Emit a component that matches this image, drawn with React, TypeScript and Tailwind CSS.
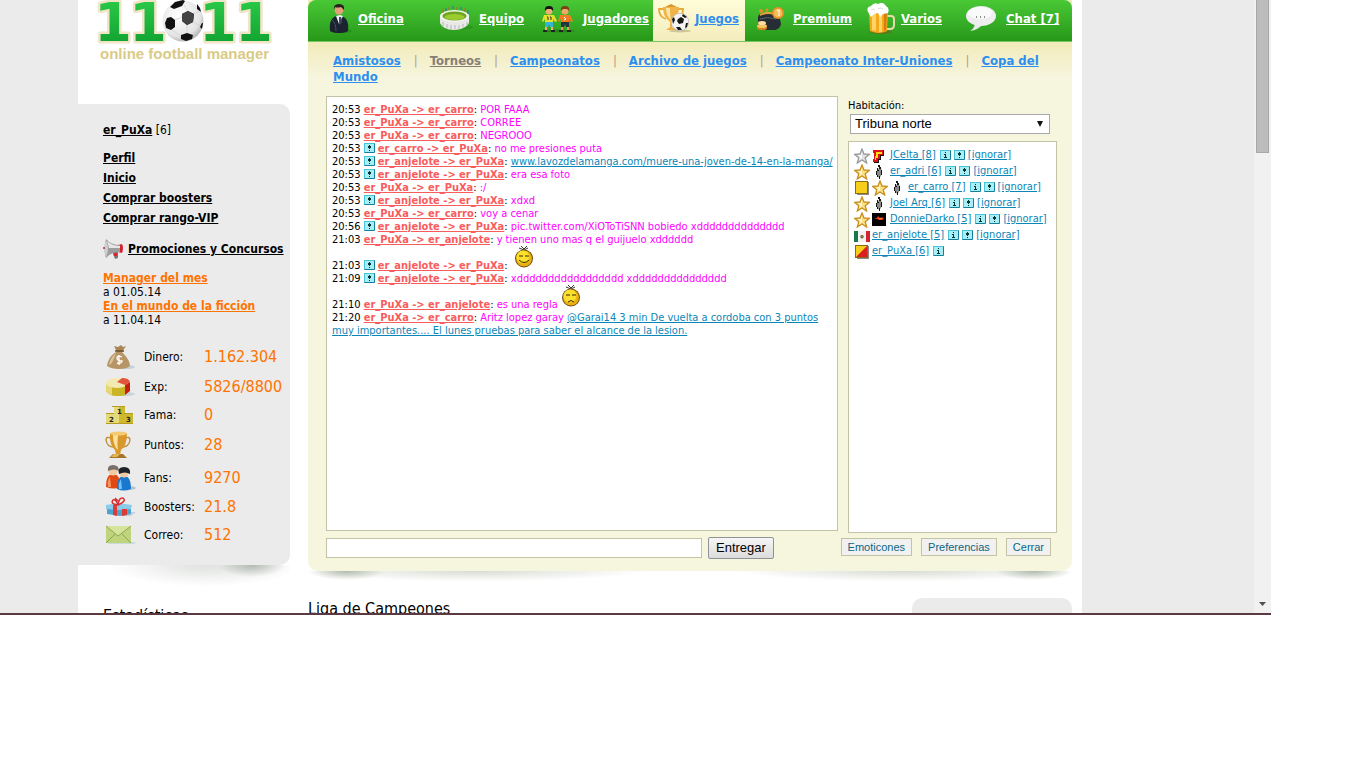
import type { ReactNode } from 'react';

function Logo() {
    return (
        <svg viewBox="0 0 212 70" className="block w-[212px] h-[70px]" role="img" aria-label="11x11 online football manager">
            <defs>
                <linearGradient id="logoGreen" x1="0" y1="0" x2="0" y2="1">
                    <stop offset="0" stopColor="#2fd04c" />
                    <stop offset="1" stopColor="#0c9a2c" />
                </linearGradient>
                <radialGradient id="logoBall" cx="0.4" cy="0.35" r="0.75">
                    <stop offset="0" stopColor="#fff" />
                    <stop offset="0.7" stopColor="#e4e4e4" />
                    <stop offset="1" stopColor="#999" />
                </radialGradient>
            </defs>
            {[35, 70, 140, 176].map((x) => (
                <text
                    key={x}
                    x={x}
                    y="41"
                    textAnchor="middle"
                    fontFamily="DejaVu Sans"
                    fontWeight="700"
                    fontSize="54"
                    fill="url(#logoGreen)"
                    stroke="#f1e5c8"
                    strokeWidth="5"
                    strokeLinejoin="round"
                    paintOrder="stroke"
                >
                    1
                </text>
            ))}
            <circle cx="105" cy="21" r="20.500" fill="url(#logoBall)" />
            <path d="M104 14l6-3 6 3-1 8-6 3-5-4zM89 18l4-1 4 3v7l-4 3-5-2-1-5zM103 35l6-2 6 2-1 4-6 2-5-2zM92 7l5-5 8-2 2 1-3 5-8 3zM119 4l3 4 1 4-4-3zM124 23l1 0-1 6-2-2z" fill="#111" />
            <path d="M104 14l6-3 6 3-1 8-6 3-5-4z" fill="#444" />
            <path d="M97 20l7-3M110 11l-4-6M116 14l5-3M109 25v8M115 22l7 4M94 30l9 6" stroke="#d2d2d2" strokeWidth="0.800" fill="none" />
            <text x="22" y="59" fontFamily="Liberation Sans" fontWeight="700" fontSize="15" fill="#d9cb87">
                online football manager
            </text>
        </svg>
    );
}

function SuitIcon() {
    return (
        <svg viewBox="0 0 24 30" className="w-[24px] h-[30px] shrink-0" aria-hidden="true">
            <ellipse cx="14" cy="27" rx="10" ry="2" fill="#1d7a14" opacity="0.500" />
            <path d="M2 27q-1-8 2-12 2-3 6-3 6 0 8 3 3 4 2 12-3 2-9 2t-9-2z" fill="#1b2330" />
            <path d="M8 12l3 8 4-8-3-1z" fill="#eef2f6" />
            <path d="M11 13h2l1 5-2 3-1-3z" fill="#3b4656" />
            <circle cx="11" cy="6" r="4.500" fill="#e3a27c" />
            <path d="M6 6q-1-6 5-6t5 6q-2-2-3-3-4 1-6 0z" fill="#26201f" />
            <path d="M4 16q4 3 4 11" stroke="#41506a" fill="none" />
        </svg>
    );
}

function StadiumIcon() {
    return (
        <svg viewBox="0 0 34 26" className="w-[34px] h-[26px] shrink-0" aria-hidden="true">
            <ellipse cx="19" cy="21" rx="15" ry="3" fill="#1d7a14" opacity="0.400" />
            <path d="M1 10v7q3 7 14 7t15-7v-7z" fill="#e8e8e6" />
            <ellipse cx="15.500" cy="10" rx="14.500" ry="6" fill="#f4f4f0" />
            <ellipse cx="15.500" cy="10" rx="12" ry="4.500" fill="#6ea51f" />
            <ellipse cx="15.500" cy="11" rx="10" ry="3" fill="#9ccb2f" />
            <path d="M4 16v4M8 18v4M12 19v4M16 19v4M20 19v4M24 18v4M28 16v4" stroke="#b5b8b4" />
            <path d="M4 3v4M10 1v3M18 1v3M26 2v4" stroke="#d05a2c" />
            <path d="M7 2v3M14 0v3M22 1v3M29 4v4" stroke="#2c6fb0" />
        </svg>
    );
}

function PlayersIcon() {
    return (
        <svg viewBox="0 0 34 28" className="w-[34px] h-[28px] shrink-0" aria-hidden="true">
            <ellipse cx="18" cy="26" rx="16" ry="1.500" fill="#176b10" opacity="0.500" />
            <circle cx="8" cy="6" r="3.500" fill="#f0b070" />
            <path d="M4 6q-1-5 4-5t4 5l-2-2H6z" fill="#141414" />
            <path d="M3 10h10l3 6-2 1-2-3v4H4v-4l-2 3-1-1z" fill="#e5e02c" />
            <path d="M4 17h8v5H9l-1-3-1 3H4z" fill="#35b4dc" />
            <path d="M4 22h2v3H4zM10 22h2v3h-2z" fill="#f0b070" />
            <path d="M2 25h4v2H2zM10 25h4v2h-4z" fill="#222" />
            <path d="M6 12h1v3M9 12h1v3" stroke="#333" fill="none" />
            <circle cx="24" cy="6" r="3.500" fill="#f0a868" />
            <path d="M20 6q-1-5 4-5t4 5l-2-2h-4z" fill="#7d3f18" />
            <path d="M19 10h10l3 6-2 1-2-3v4h-8v-4l-2 3-1-1z" fill="#f07b20" />
            <path d="M20 17h8v5h-3l-1-3-1 3h-3z" fill="#26313f" />
            <path d="M20 22h2v3h-2zM26 22h2v3h-2z" fill="#e89a60" />
            <path d="M18 25h4v2h-4zM26 25h4v2h-4z" fill="#222" />
            <path d="M23 12l2 2-2 1" stroke="#fff" fill="none" />
        </svg>
    );
}

function CupBallIcon() {
    return (
        <svg viewBox="0 0 34 30" className="w-[34px] h-[30px] shrink-0" aria-hidden="true">
            <ellipse cx="22" cy="27" rx="11" ry="1.500" fill="#cfc79a" />
            <path d="M6 5H1q0 8 7 10M20 5h5q0 8-6 9" stroke="#e9a93c" strokeWidth="1.800" fill="none" />
            <path d="M5 3h16q0 9-5 13l-2 2v5l4 3H8l4-3v-5l-2-2Q5 12 5 3z" fill="#f0b44a" />
            <path d="M8 4h4q0 8 1 12-5-4-5-12z" fill="#fde4a4" />
            <path d="M7 3l6-3 6 3z" fill="#dc962c" />
            <circle cx="22" cy="18" r="9" fill="#a9a9a9" />
            <circle cx="22" cy="18" r="8.500" fill="#f3f3f3" />
            <path d="M20 15l3-2 3 2-1 4-4 1-2-3zM14 15l2-2 1 3-2 4zM25 10l4 3-2 1-3-2zM28 19l2 0-1 4-2 1zM18 23l4 0 2 3-4 0z" fill="#171717" />
        </svg>
    );
}

function PurseIcon() {
    return (
        <svg viewBox="0 0 32 26" className="w-[32px] h-[26px] shrink-0" aria-hidden="true">
            <path d="M3 12q0-4 4-5h13q4 1 5 6l1 5q-1 5-6 6H8q-5-1-5-6z" fill="#262d34" />
            <path d="M5 9q8-4 18 0" stroke="#e9a437" strokeWidth="2" fill="none" />
            <path d="M5 13q7-3 16 0" stroke="#59656f" fill="none" />
            <circle cx="6" cy="5" r="2" fill="#e28d2a" />
            <circle cx="12" cy="4" r="1.500" fill="#e28d2a" />
            <circle cx="23" cy="7" r="6" fill="#e9912b" />
            <circle cx="23" cy="7" r="4.300" fill="#f7bd5c" />
            <path d="M22 5l2-1v6" stroke="#fff3cf" strokeWidth="1.300" fill="none" />
            <ellipse cx="7" cy="22" rx="5" ry="2" fill="#d9831c" />
            <ellipse cx="7" cy="20" rx="5" ry="2" fill="#f8c660" />
            <ellipse cx="7" cy="17" rx="4" ry="2" fill="#fde09a" />
        </svg>
    );
}

function BeerIcon() {
    return (
        <svg viewBox="0 0 28 32" className="w-[28px] h-[32px] shrink-0" aria-hidden="true">
            <ellipse cx="14" cy="29" rx="11" ry="2" fill="#78601c" opacity="0.600" />
            <path d="M20 13h4q3 0 3 3v6q0 4-4 4h-3" stroke="#e7dca8" strokeWidth="2" fill="none" />
            <path d="M2 8h19l-1 20q-8 4-17 0z" fill="#f4a81c" />
            <path d="M5 10h4v18l-4-1zM12 10h3v19h-3z" fill="#ffd467" />
            <path d="M17 10h3l-1 17-2 1z" fill="#d57f0f" />
            <path d="M1 9q-2-5 3-6 3-4 7-2 5-3 8 2 4 2 2 7l-5 1-3 3-2-4-4 1-3 3z" fill="#fff" />
            <path d="M4 7q2-2 4 0M11 6q3-2 5 0" stroke="#e0ddd0" fill="none" />
        </svg>
    );
}

function BubbleIcon() {
    return (
        <svg viewBox="0 0 32 26" className="w-[32px] h-[26px] shrink-0" aria-hidden="true">
            <path d="M10 18q-1 5-5 7 8-1 12-6z" fill="#e9e9e9" />
            <ellipse cx="16" cy="10" rx="15" ry="10" fill="#eee" />
            <ellipse cx="15" cy="7" rx="12" ry="6" fill="#fafafa" />
            <path d="M11 11h1M15 11h1M19 11h1" stroke="#222" />
        </svg>
    );
}

function MegaphoneIcon() {
    return (
        <svg viewBox="0 0 22 20" className="w-[22px] h-[20px] shrink-0" aria-hidden="true">
            <path d="M10 12h5v7l-3 1-2-5z" fill="#777" />
            <path d="M11 14h3v3h-3z" fill="#cf2a30" />
            <path d="M15 6l4-1q2 4 0 9l-4-1z" fill="#d5212b" />
            <path d="M3 0q5 6 14 6v7q-9 0-14 6-3-9 0-19z" fill="#9d9d9d" />
            <path d="M4 2q5 5 13 5v2L6 9z" fill="#e6e6e6" />
            <path d="M3 1q4 9 0 17-3-9 0-17z" fill="#cfcfcf" />
            <circle cx="1" cy="9" r="1" fill="#c81f26" />
        </svg>
    );
}

function MoneyIcon() {
    return (
        <svg viewBox="0 0 32 26" className="w-[32px] h-[26px]" aria-hidden="true">
            <ellipse cx="20" cy="23" rx="10" ry="2" fill="#c2d3da" />
            <path d="M9 2l4 1 3-2 2 2 3-1-4 6h-5z" fill="#a98757" />
            <path d="M11 8h6q8 8 8 14-3 3-11 3T2 22Q3 13 11 8z" fill="#b89566" />
            <path d="M11 9q-6 5-7 12 3-1 5-7z" fill="#dcc49c" />
            <path d="M10 7h9" stroke="#6b4f2a" strokeWidth="1.500" />
            <path d="M17 13q-5-2-5 1t5 3q0 3-5 2M14 11v10" stroke="#fff" strokeWidth="1.300" fill="none" />
        </svg>
    );
}

function ExpIcon() {
    return (
        <svg viewBox="0 0 32 22" className="w-[32px] h-[22px]" aria-hidden="true">
            <ellipse cx="18" cy="18" rx="12" ry="2" fill="#c5d5da" />
            <path d="M1 7v8q3 5 11 5 6 0 8-1V8z" fill="#c9b526" />
            <path d="M1 7v8q2 3 6 4V9z" fill="#e6d872" />
            <ellipse cx="12" cy="7" rx="11" ry="5" fill="#f3eab2" />
            <path d="M20 9l5-3v9l-5 4z" fill="#c81e0c" />
            <path d="M12 6l5-4q7 0 8 4l-5 3z" fill="#e2543c" />
        </svg>
    );
}

function PodiumIcon() {
    return (
        <svg viewBox="0 0 32 20" className="w-[32px] h-[20px]" aria-hidden="true">
            <path d="M1 9h8V1h11v8h8v9H1z" fill="#cdb92e" />
            <path d="M1 9h8V1h5v17H1z" fill="#e4da7c" />
            <path d="M7 1h13v1H7zM1 8h8v1H1zM19 8h9v1h-9zM1 18h27v1H1z" fill="#b89b22" />
            <g fontFamily="DejaVu Sans" fontWeight="700" fontSize="7" fill="#222">
                <text x="12" y="9">1</text>
                <text x="4" y="17">2</text>
                <text x="21" y="17">3</text>
            </g>
        </svg>
    );
}

function TrophyIcon() {
    return (
        <svg viewBox="0 0 32 28" className="w-[32px] h-[28px]" aria-hidden="true">
            <path d="M6 7q-5-2-5 2 1 7 8 7M20 7q5-2 5 2-1 7-8 7" stroke="#c28e35" strokeWidth="1.400" fill="none" />
            <path d="M5 2q8 3 17 0 0 13-6 17l-1 5h-4l-1-5Q4 14 5 2z" fill="#d8982c" />
            <path d="M8 4h5q-1 10 0 15-5-4-5-15z" fill="#fbe19c" />
            <ellipse cx="13.500" cy="2.500" rx="8.500" ry="2" fill="#f5ca72" />
            <path d="M8 23h10l4 4H4z" fill="#a87629" />
            <path d="M9 23h6l-3 3H6z" fill="#e5b553" />
        </svg>
    );
}

function FansIcon() {
    return (
        <svg viewBox="0 0 32 28" className="w-[32px] h-[28px]" aria-hidden="true">
            <ellipse cx="22" cy="24" rx="9" ry="2" fill="#b4c4cc" />
            <path d="M1 23q0-13 7-13t8 13q-7 3-15 0z" fill="#e04a12" />
            <path d="M5 13q-3 4-2 10l3 0z" fill="#f99764" />
            <circle cx="8" cy="7" r="4.500" fill="#f3c9a2" />
            <path d="M3 7q-1-6 5-6t6 6q-5-3-11 0z" fill="#77706a" />
            <path d="M12 25q0-13 7-13t7 13q-7 3-14 0z" fill="#1b78cf" />
            <path d="M16 15q-3 4-2 10l3 0z" fill="#7cc0f2" />
            <circle cx="19" cy="9" r="4.500" fill="#f3c9a2" />
            <path d="M14 10q-2-7 5-7t6 7q-5-3-11 0z" fill="#1d2329" />
        </svg>
    );
}

function GiftIcon() {
    return (
        <svg viewBox="0 0 32 20" className="w-[32px] h-[20px]" aria-hidden="true">
            <path d="M20 15h11l-5 4h-8z" fill="#c6d2d8" />
            <path d="M2 10h24v7l-11 2-13-2z" fill="#4ba3d4" />
            <path d="M1 8l12-2 14 2-1 4-12 1-13-1z" fill="#8bcbea" />
            <path d="M8 8l4-1v12l-4-1zM17 12h5v6l-5 1z" fill="#dd3b36" />
            <path d="M13 8Q5 7 8 3q3-1 5 5 1-8 5-7 4 3-5 7zM10 1l3 3" stroke="#d92f33" strokeWidth="1.500" fill="none" />
        </svg>
    );
}

function MailIcon() {
    return (
        <svg viewBox="0 0 32 20" className="w-[32px] h-[20px]" aria-hidden="true">
            <path d="M4 17h27l-2 2H3z" fill="#c9dbd9" />
            <path d="M1 1h25v17H1z" fill="#bfd47c" />
            <path d="M1 1h25L13 11z" fill="#d5e49b" />
            <path d="M1 1l12 10L26 1M1 18l9-9M26 18l-9-9" stroke="#7f9b45" strokeWidth="0.800" fill="none" />
        </svg>
    );
}

function InfoIcon() {
    return (
        <svg viewBox="0 0 11 10" className="block w-[11px] h-[10px]" aria-hidden="true">
            <rect width="11" height="10" rx="1" fill="#12809c" />
            <path d="M0 0h10v1H1v8H0z" fill="#48c4da" />
            <path d="M1 1h9v8H1z" fill="#a8eef6" />
            <path d="M5 2h1v1H5zM4 4h2v3h1v1H4V7h1V5H4z" fill="#033" />
        </svg>
    );
}

function AlertIcon({ inline = false }: { inline?: boolean }) {
    return (
        <svg viewBox="0 0 11 10" className={inline ? 'inline w-[11px] h-[10px] align-[-1px]' : 'block w-[11px] h-[10px]'} aria-hidden="true">
            <rect width="11" height="10" rx="1" fill="#12809c" />
            <path d="M0 0h10v1H1v8H0z" fill="#48c4da" />
            <path d="M1 1h9v8H1z" fill="#a8eef6" />
            <path d="M5 2h1v1h1v2H6v1H5V5H4V3h1zM5 7h1v1H5z" fill="#033" />
        </svg>
    );
}

function Smiley({ sad = false }: { sad?: boolean }) {
    return (
        <svg viewBox="0 0 20 23" className="inline w-[20px] h-[23px] align-baseline" role="img" aria-label={sad ? 'triste' : 'contento'}>
            <path d="M7 0l3 3 3-3M5 2l5 2 4-2" stroke="#333" fill="none" />
            <circle cx="10" cy="12.500" r="9" fill="#6c4c0c" />
            <circle cx="10" cy="12.500" r="8" fill="#e9b010" />
            <circle cx="9" cy="11" r="6.500" fill="#fbe02c" />
            <path d="M5 10h4M11 10h4" stroke="#3a2600" />
            <path d={sad ? 'M7 17q3-3 6 0' : 'M5 14q5 5 10 0'} stroke="#3a2600" fill="none" />
        </svg>
    );
}

function Star({ silver = false }: { silver?: boolean }) {
    return (
        <svg viewBox="0 0 16 16" className="w-[16px] h-[16px]" aria-hidden="true">
            <path
                d="M8 1l2 5 5.500.3-4.300 3.500 1.500 5.200L8 12l-4.700 3 1.500-5.200L.5 6.300 6 6z"
                fill={silver ? '#e2e2e2' : '#fbe08a'}
                stroke={silver ? '#999' : '#c98f1c'}
                strokeWidth="1.300"
            />
            <path d="M8 4v6l-3 2 1-3-2-2h3z" fill={silver ? '#fafafa' : '#fff6cf'} />
        </svg>
    );
}

function Spain() {
    return (
        <svg viewBox="0 0 14 14" className="w-[14px] h-[14px] mx-[2px]" aria-hidden="true">
            <path d="M2 1h10v6H9v4H7v3H2v-3h1V5H2z" fill="#161616" />
            <path d="M1 1h10v5H8v4H6v3H1v-3h1V4H1z" fill="#e11414" />
            <path d="M4 3h6v2H6v4H4v2H3V7h1z" fill="#ffdf12" />
        </svg>
    );
}

function Feather() {
    return (
        <svg viewBox="0 0 14 16" className="w-[14px] h-[16px] mx-[2px]" aria-hidden="true">
            <path d="M7 4h2l1 3-1 5-2 2-2-3V7z" fill="#8a8a8a" />
            <path d="M6 1h2v2h1v2H7V3H6zM5 4h1v3H5zM4 7h1v4H4zM9 6h1v5H9zM5 11h1v2H5zM7 12h1v3H7zM6 6h1v1H6z" fill="#151515" />
        </svg>
    );
}

function Card({ red = false }: { red?: boolean }) {
    return (
        <svg viewBox="0 0 16 16" className="w-[16px] h-[16px]" aria-hidden="true">
            <path d="M3 2h12v13H3z" fill="#8b8b8b" />
            <path d="M1 1h13v13H1z" fill="#8a6d12" />
            <path d="M2 2h11v11H2z" fill="#f6cf1c" />
            {red && <path d="M13 2v11H2z" fill="#dc1f1f" />}
        </svg>
    );
}

function Fire() {
    return (
        <svg viewBox="0 0 14 14" className="w-[14px] h-[14px] mx-[2px]" aria-hidden="true">
            <path d="M0 0h14v13H0z" fill="#000" />
            <path d="M2 6l3-1 1-2 2 2 2-1 2 2-2 1H7L5 6z" fill="#f0381c" />
            <path d="M4 6h3l1-1 2 1z" fill="#ffc32c" />
        </svg>
    );
}

function Mexico() {
    return (
        <svg viewBox="0 0 16 16" className="w-[16px] h-[16px]" aria-hidden="true">
            <path d="M0 3h16v11H0z" fill="#f2f2f2" />
            <path d="M0 3h4v11H0z" fill="#187a4c" />
            <path d="M12 3h4v11h-4z" fill="#cf2530" />
            <path d="M7 7h2l1 2-2 2-2-2z" fill="#85724a" />
        </svg>
    );
}

const navItems = [
    { label: 'Oficina', icon: <SuitIcon />, cls: 'pl-[20px] gap-[6px]' },
    { label: 'Equipo', icon: <StadiumIcon />, cls: 'pl-[13px] gap-[6px]' },
    { label: 'Jugadores', icon: <PlayersIcon />, cls: 'pl-[9px] gap-[8px]' },
    { label: 'Juegos', icon: <CupBallIcon />, cls: 'pl-[5px] gap-[3px]', active: true },
    { label: 'Premium', icon: <PurseIcon />, cls: 'pl-[10px] gap-[6px]' },
    { label: 'Varios', icon: <BeerIcon />, cls: 'pl-[12px] gap-[6px]' },
    { label: 'Chat [7]', icon: <BubbleIcon />, cls: 'pl-[13px] gap-[9px]' },
];

const subItems = ['Amistosos', 'Torneos', 'Campeonatos', 'Archivo de juegos', 'Campeonato Inter-Uniones', 'Copa del Mundo'];

const stats = [
    { label: 'Dinero', value: '1.162.304', icon: <MoneyIcon />, cls: 'h-[30px]' },
    { label: 'Exp', value: '5826/8800', icon: <ExpIcon />, cls: 'h-[30px]' },
    { label: 'Fama', value: '0', icon: <PodiumIcon />, cls: 'h-[26px]' },
    { label: 'Puntos', value: '28', icon: <TrophyIcon />, cls: 'h-[34px]' },
    { label: 'Fans', value: '9270', icon: <FansIcon />, cls: 'h-[32px]' },
    { label: 'Boosters', value: '21.8', icon: <GiftIcon />, cls: 'h-[26px]' },
    { label: 'Correo', value: '512', icon: <MailIcon />, cls: 'h-[30px]' },
];

type Message = { time: string; alert?: boolean; who: string; body: ReactNode };

const linkCls = 'text-[#0a86b8] underline';

const messages: Message[] = [
    { time: '20:53', who: 'er_PuXa -> er_carro', body: 'POR FAAA' },
    { time: '20:53', who: 'er_PuXa -> er_carro', body: 'CORREE' },
    { time: '20:53', who: 'er_PuXa -> er_carro', body: 'NEGROOO' },
    { time: '20:53', alert: true, who: 'er_carro -> er_PuXa', body: 'no me presiones puta' },
    {
        time: '20:53',
        alert: true,
        who: 'er_anjelote -> er_PuXa',
        body: <a href="#" className={linkCls}>www.lavozdelamanga.com/muere-una-joven-de-14-en-la-manga/</a>,
    },
    { time: '20:53', alert: true, who: 'er_anjelote -> er_PuXa', body: 'era esa foto' },
    { time: '20:53', who: 'er_PuXa -> er_PuXa', body: ':/' },
    { time: '20:53', alert: true, who: 'er_anjelote -> er_PuXa', body: 'xdxd' },
    { time: '20:53', who: 'er_PuXa -> er_carro', body: 'voy a cenar' },
    { time: '20:56', alert: true, who: 'er_anjelote -> er_PuXa', body: 'pic.twitter.com/XiOToTiSNN bobiedo xdddddddddddddd' },
    { time: '21:03', who: 'er_PuXa -> er_anjelote', body: 'y tienen uno mas q el guijuelo xdddddd' },
    { time: '21:03', alert: true, who: 'er_anjelote -> er_PuXa', body: <>&nbsp;<Smiley /></> },
    { time: '21:09', alert: true, who: 'er_anjelote -> er_PuXa', body: 'xddddddddddddddddd xddddddddddddddd' },
    { time: '21:10', who: 'er_PuXa -> er_anjelote', body: <>es una regla <Smiley sad /></> },
    {
        time: '21:20',
        who: 'er_PuXa -> er_carro',
        body: (
            <>
                Aritz lopez garay{' '}
                <a href="#" className={linkCls}>
                    @Garai14 3 min De vuelta a cordoba con 3 puntos muy importantes.... El lunes pruebas para saber el alcance de la lesion.
                </a>
            </>
        ),
    },
];

const users = [
    { name: 'JCelta [8]', icons: <><Star silver /><Spain /></> },
    { name: 'er_adri [6]', icons: <><Star /><Feather /></> },
    { name: 'er_carro [7]', icons: <><Card /><span className="w-[2px]" /><Star /><Feather /></> },
    { name: 'Joel Arq [6]', icons: <><Star /><Feather /></> },
    { name: 'DonnieDarko [5]', icons: <><Star /><Fire /></> },
    { name: 'er_anjelote [5]', icons: <Mexico /> },
    { name: 'er_PuXa [6]', icons: <Card red />, self: true },
];

function Sidebar() {
    return (
        <aside className="w-[212px] shrink-0">
            <a href="#" className="block h-[104px]">
                <Logo />
            </a>
            <div className="h-[461px] rounded-r-[10px] bg-[#ebebeb] pl-[25px] pt-[18px] text-[12px] leading-[16px] text-black">
                <p>
                    <a href="#" className="font-bold underline">er_PuXa</a> [6]
                </p>
                <ul className="mt-[10px] font-bold leading-[20px] underline">
                    {['Perfil', 'Inicio', 'Comprar boosters', 'Comprar rango-VIP'].map((item) => (
                        <li key={item}>
                            <a href="#">{item}</a>
                        </li>
                    ))}
                </ul>
                <a href="#" className="mt-[11px] flex h-[20px] items-center gap-[3px] whitespace-nowrap font-bold">
                    <MegaphoneIcon />
                    <span className="underline">Promociones y Concursos</span>
                </a>
                <div className="mt-[12px] leading-[14px]">
                    <a href="#" className="block font-bold text-[#ff7300] underline">Manager del mes</a>
                    <p>a 01.05.14</p>
                    <a href="#" className="block whitespace-nowrap font-bold text-[#ff7300] underline">En el mundo de la ficción</a>
                    <p>a 11.04.14</p>
                </div>
                <table className="mt-[15px] border-collapse">
                    <tbody>
                        {stats.map((s) => (
                            <tr key={s.label} className={s.cls}>
                                <td className="w-[41px] p-0 pl-[2px] align-middle [&>svg]:block">{s.icon}</td>
                                <th scope="row" className="w-[60px] p-0 text-left align-middle font-normal">{s.label}:</th>
                                <td className="p-0 align-middle text-[16px] text-[#ff7300]">{s.value}</td>
                            </tr>
                        ))}
                    </tbody>
                </table>
            </div>
            <div className="h-[24px] bg-[radial-gradient(ellipse_16%_50%_at_82%_0%,#8a958a99_0%,transparent_100%),radial-gradient(ellipse_45%_90%_at_60%_0%,#c9cec999_0%,transparent_100%)]" />
            <h2 className="mt-[15px] pl-[25px] text-[16px] leading-[24px] text-black">Estadísticas</h2>
        </aside>
    );
}

function TopNav() {
    return (
        <nav className="grid h-[42px] grid-cols-[118fr_106fr_121fr_92fr_110fr_97fr_120fr] overflow-hidden rounded-t-[8px] border-b border-[#74c765] bg-linear-to-b from-[#49c835] via-[#38b028] to-[#279818] text-[13px] font-bold">
            {navItems.map((item) => (
                <a
                    key={item.label}
                    href="#"
                    className={`flex h-[42px] items-center whitespace-nowrap pb-[4px] ${item.cls} ${item.active ? 'bg-linear-to-b from-[#fffcd9] to-[#f3ecbc] text-[#2c8ff0]' : 'text-white'}`}
                >
                    {item.icon}
                    <span className="underline">{item.label}</span>
                </a>
            ))}
        </nav>
    );
}

function ChatLog() {
    return (
        <div className="min-h-[435px] flex-1 border border-[#c5c3a5] bg-white py-[6px] pl-[5px] pr-[2px] text-[11px] leading-[13px] text-black">
            {messages.map((m, i) => (
                <p key={i}>
                    {m.time} {m.alert && <><AlertIcon inline /> </>}
                    <a href="#" className="font-bold text-[#f95c5c] underline">{m.who}</a>:{' '}
                    <span className="text-[#ff00ff]">{m.body}</span>
                </p>
            ))}
        </div>
    );
}

function RoomPanel() {
    return (
        <div className="flex w-[209px] shrink-0 flex-col">
            <label htmlFor="room" className="mt-[2px] text-[11px] leading-[16px] text-black">Habitación:</label>
            <div className="relative mx-[2px] w-[200px]">
                <select
                    id="room"
                    className="block h-[20px] w-full appearance-none border border-[#a9a9a9] bg-white pl-[4px] font-['Liberation_Sans',sans-serif] text-[13px] leading-[18px] text-black"
                >
                    <option>Tribuna norte</option>
                </select>
                <svg viewBox="0 0 6 6" className="pointer-events-none absolute right-[7px] top-[7px] h-[6px] w-[6px]" aria-hidden="true">
                    <path d="M0 0h6L3 6z" fill="#111" />
                </svg>
            </div>
            <ul className="mt-[7px] h-[392px] border border-[#c5c3a5] bg-white px-[5px] py-[5px] text-[11px] text-[#0a86b8]">
                {users.map((u) => (
                    <li key={u.name} className="flex h-[16px] items-center whitespace-nowrap">
                        <span className="mr-[2px] mt-[2px] flex items-center">{u.icons}</span>
                        <a href="#" className="underline">{u.name}</a>
                        <a href="#" className="ml-[4px]" aria-label="Info"><InfoIcon /></a>
                        {!u.self && (
                            <>
                                <a href="#" className="ml-[3px]" aria-label="Mensaje"><AlertIcon /></a>
                                <a href="#" className="ml-[3px] underline">[ignorar]</a>
                            </>
                        )}
                    </li>
                ))}
            </ul>
        </div>
    );
}

function ChatForm() {
    return (
        <form className="mt-[4px] flex items-start pl-[18px] pr-[21px]" onSubmit={(e) => e.preventDefault()}>
            <input
                type="text"
                aria-label="Mensaje"
                className="mt-[1px] h-[20px] max-w-[376px] flex-1 border border-[#c5c3a5] bg-white px-[4px] text-[12px]"
            />
            <button
                type="submit"
                className="ml-[6px] h-[22px] rounded-[2px] border border-[#8f9296] bg-linear-to-b from-[#f6f6f6] to-[#dcdcdc] px-[7px] font-['Liberation_Sans',sans-serif] text-[13px] leading-[20px] text-black"
            >
                Entregar
            </button>
            <div className="ml-auto mt-[1px] flex gap-[9px]">
                {['Emoticones', 'Preferencias', 'Cerrar'].map((b) => (
                    <button
                        key={b}
                        type="button"
                        className="h-[18px] border border-[#c5c3a5] bg-[#f1f1f1] px-[6px] font-['Liberation_Sans',sans-serif] text-[11px] leading-[16px] text-[#0a6684]"
                    >
                        {b}
                    </button>
                ))}
            </div>
        </form>
    );
}

export default function App() {
    return (
        <div className="flex h-screen flex-col bg-white font-['DejaVu_Sans_Condensed','Noto_Sans',sans-serif] pb-[153px]">
            <div className="mr-[95px] flex min-h-0 flex-1 border-b-2 border-[#5a3a40] bg-[#ebebeb]">
                <div className="ml-[78px] mr-[172px] flex min-w-0 flex-1 overflow-hidden bg-white">
                    <Sidebar />
                    <main className="ml-[18px] mr-[10px] min-w-0 flex-1">
                        <div className="h-[571px] rounded-b-[10px] bg-[#f6f5de] bg-[linear-gradient(to_bottom,#f2ebb9_42px,#f6f5de_78px)]">
                            <TopNav />
                            <div className="h-[54px] pl-[25px] pr-[20px] pt-[11px] text-[13px] font-bold leading-[16px] text-[#2c8ff0]">
                                {subItems.map((item, i) => (
                                    <span key={item}>
                                        {i > 0 && <span className="ml-[13px] mr-[12px] font-normal text-[#b59b8a]">|</span>}
                                        <a href="#" className={item === 'Torneos' ? 'text-[#857f78] underline' : 'underline'}>{item}</a>
                                    </span>
                                ))}
                            </div>
                            <div className="flex items-start gap-[10px] pl-[18px] pr-[15px]">
                                <ChatLog />
                                <RoomPanel />
                            </div>
                            <ChatForm />
                        </div>
                        <div className="h-[13px] bg-[radial-gradient(ellipse_5%_70%_at_95%_0%,#8d9c85aa_0%,transparent_100%),radial-gradient(ellipse_22%_80%_at_78%_0%,#aab5a277_0%,transparent_100%),radial-gradient(ellipse_5%_70%_at_5%_0%,#8d9c85aa_0%,transparent_100%),radial-gradient(ellipse_22%_80%_at_22%_0%,#aab5a277_0%,transparent_100%)]" />
                        <div className="mt-[14px] flex justify-between">
                            <h2 className="text-[16px] leading-[22px] text-black">Liga de Campeones</h2>
                            <div className="h-[60px] w-[160px] rounded-t-[10px] bg-[#ebebeb]" />
                        </div>
                    </main>
                </div>
                <div className="flex w-[17px] shrink-0 flex-col items-center justify-between bg-[#f1f1f1]">
                    <div className="h-[153px] w-[13px] border border-t-0 border-[#a8a8a8] bg-[#bcbcbc]" />
                    <svg viewBox="0 0 7 4" className="mb-[7px] h-[4px] w-[7px]" aria-hidden="true">
                        <path d="M0 0h7L3.500 4z" fill="#505050" />
                    </svg>
                </div>
            </div>
        </div>
    );
}
